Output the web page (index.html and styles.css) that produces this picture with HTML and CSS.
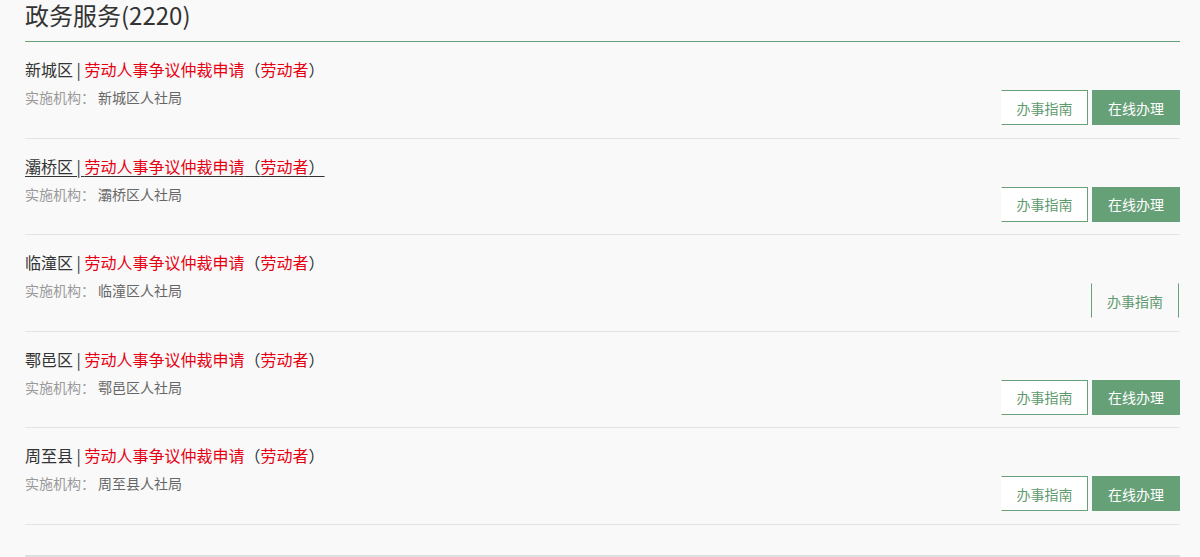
FILE: index.html
```html
<!DOCTYPE html>
<html lang="zh-CN">
<head>
<meta charset="utf-8">
<title>政务服务</title>
<link rel="stylesheet" href="styles.css">
</head>
<body>
<div class="wrap">
  <h2 class="heading">政务服务(2220)</h2>
  <ul class="list">
    <li class="item">
      <div class="info">
        <a class="name"><span class="area">新城区 | </span><span class="hl">劳动人事争议仲裁申请</span><span class="area">（</span><span class="hl">劳动者</span><span class="area">）</span></a>
        <p class="org"><span class="label">实施机构：</span><span class="val">新城区人社局</span></p>
      </div>
      <div class="btns">
        <a class="btn guide">办事指南</a><a class="btn online">在线办理</a>
      </div>
    </li>
    <li class="item">
      <div class="info">
        <a class="name hover"><span class="area">灞桥区 | </span><span class="hl">劳动人事争议仲裁申请</span><span class="area">（</span><span class="hl">劳动者</span><span class="area">） </span></a>
        <p class="org"><span class="label">实施机构：</span><span class="val">灞桥区人社局</span></p>
      </div>
      <div class="btns">
        <a class="btn guide">办事指南</a><a class="btn online">在线办理</a>
      </div>
    </li>
    <li class="item">
      <div class="info">
        <a class="name"><span class="area">临潼区 | </span><span class="hl">劳动人事争议仲裁申请</span><span class="area">（</span><span class="hl">劳动者</span><span class="area">）</span></a>
        <p class="org"><span class="label">实施机构：</span><span class="val">临潼区人社局</span></p>
      </div>
      <div class="btns">
        <a class="btn guide sides">办事指南</a>
      </div>
    </li>
    <li class="item">
      <div class="info">
        <a class="name"><span class="area">鄠邑区 | </span><span class="hl">劳动人事争议仲裁申请</span><span class="area">（</span><span class="hl">劳动者</span><span class="area">）</span></a>
        <p class="org"><span class="label">实施机构：</span><span class="val">鄠邑区人社局</span></p>
      </div>
      <div class="btns">
        <a class="btn guide">办事指南</a><a class="btn online">在线办理</a>
      </div>
    </li>
    <li class="item">
      <div class="info">
        <a class="name"><span class="area">周至县 | </span><span class="hl">劳动人事争议仲裁申请</span><span class="area">（</span><span class="hl">劳动者</span><span class="area">）</span></a>
        <p class="org"><span class="label">实施机构：</span><span class="val">周至县人社局</span></p>
      </div>
      <div class="btns">
        <a class="btn guide">办事指南</a><a class="btn online">在线办理</a>
      </div>
    </li>
  </ul>
  <div class="pager"></div>
</div>
</body>
</html>
```

FILE: styles.css
```css
html, body {
  margin: 0;
  padding: 0;
  background: #f9f9f9;
  font-family: "Noto Sans CJK SC", "Noto Sans", sans-serif;
  color: #333;
}
.wrap {
  margin: 0 20px 0 25px;
}
.heading {
  margin: 0;
  font-size: 24px;
  font-weight: normal;
  line-height: 30px;
  color: #333;
  padding-bottom: 11px;
  border-bottom: 1px solid #69a07a;
}
.list {
  list-style: none;
  margin: 0;
  padding: 0;
}
.item {
  box-sizing: border-box;
  height: 96.5px;
  display: flex;
  justify-content: space-between;
  align-items: flex-start;
  padding: 15px 0 0;
  border-bottom: 1px solid #e4e4e4;
}
.info {
  display: flex;
  flex-direction: column;
}
.name {
  font-size: 16px;
  line-height: 24px;
  text-decoration: none;
}
.name.hover {
  text-decoration: underline;
  text-underline-offset: 3px;
}
.area {
  color: #333;
}
.hl {
  color: #e60012;
}
.org {
  margin: 6px 0 0;
  font-size: 14px;
  line-height: 20px;
}
.label {
  color: #999;
}
.val {
  color: #666;
  margin-left: 3px;
}
.btns {
  display: flex;
  gap: 4px;
  margin-top: 33px;
}
.btn {
  box-sizing: border-box;
  display: flex;
  align-items: center;
  justify-content: center;
  height: 35px;
  width: 88px;
  font-size: 14px;
  text-decoration: none;
}
.guide {
  background: #fff;
  color: #5f9a6e;
  border: 1px solid #69a07a;
  border-left-color: transparent;
  width: 87px;
}
.guide.sides {
  width: 88px;
  background: transparent;
  border-left-color: #69a07a;
  border-top-color: transparent;
  border-bottom-color: transparent;
  margin-right: 1px;
}
.online {
  background: #66a077;
  color: #fff;
}
.pager {
  margin-top: 30px;
  border-top: 2px solid #dedede;
  height: 10px;
}
```
